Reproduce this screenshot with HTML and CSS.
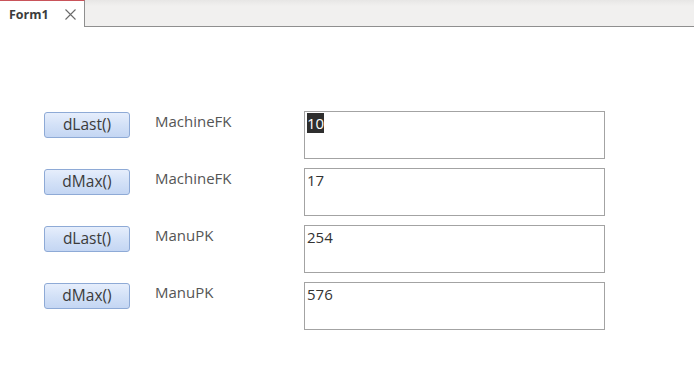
FILE: index.html
```html
<!DOCTYPE html>
<html lang="en">
<head>
    <meta charset="UTF-8">
    <title>Form1</title>
    <link rel="stylesheet" href="styles.css">
</head>
<body>
    <div class="tabbar">
        <div class="tab">
            <span class="tab-title">Form1</span>
            <svg class="tab-close" width="11" height="11" viewBox="0 0 11 11">
                <path d="M0.5 0.5 L10.5 10.5 M10.5 0.5 L0.5 10.5" stroke="#6a6a6a" stroke-width="1.1" fill="none"/>
            </svg>
        </div>
        <div class="tab-rest"></div>
    </div>

    <div class="form">
        <div class="row">
            <button class="cmd">dLast()</button>
            <span class="label">MachineFK</span>
            <div class="box"><span class="sel">10</span></div>
        </div>
        <div class="row">
            <button class="cmd">dMax()</button>
            <span class="label">MachineFK</span>
            <div class="box">17</div>
        </div>
        <div class="row">
            <button class="cmd">dLast()</button>
            <span class="label">ManuPK</span>
            <div class="box">254</div>
        </div>
        <div class="row">
            <button class="cmd">dMax()</button>
            <span class="label">ManuPK</span>
            <div class="box">576</div>
        </div>
    </div>
</body>
</html>
```

FILE: styles.css
```css
/* Base styling */
body {
    margin: 0;
    background: #fff;
    font-family: "Open Sans", "Noto Sans", Arial, sans-serif;
}
.tabbar {
    display: flex;
    height: 27px;
}
.tab {
    width: 85px;
    display: flex;
    align-items: center;
    background: #fff;
    border-top: 1px solid #c9535a;
    border-right: 1px solid #8f8f8f;
    box-sizing: border-box;
}
.tab-title {
    margin-left: 9px;
    font-size: 12.5px;
    font-weight: 700;
    color: #3c3c3c;
    padding-top: 1px;
}
.tab-close {
    margin-left: 16px;
    margin-top: 1px;
}
.tab-rest {
    flex: 1;
    background: linear-gradient(#e7e6e5, #f1f0ef 6px, #f1f0ef);
    border-bottom: 1px solid #8f8f8f;
    box-sizing: border-box;
}
.form {
    padding: 84px 0 0 44px;
    display: flex;
    flex-direction: column;
    gap: 9px;
}
.row {
    display: flex;
    align-items: flex-start;
    height: 48px;
}
.cmd {
    width: 86px;
    height: 26px;
    margin-top: 1px;
    padding: 0 0 2px;
    border: 1px solid #8eaad6;
    border-radius: 3px;
    background: linear-gradient(#e6eefc, #d3e1f7 50%, #c4d6f3);
    font-family: inherit;
    font-size: 15.5px;
    color: #3b3b3b;
}
.label {
    margin-left: 25px;
    width: 149px;
    font-size: 15px;
    color: #555;
}
.box {
    width: 301px;
    height: 48px;
    box-sizing: border-box;
    border: 1px solid #a3a3a3;
    padding: 1px 0 0 2px;
    font-size: 15px;
    line-height: 20px;
    color: #333;
}
.sel {
    background: #2e2e2e;
    color: #fff;
}
```
